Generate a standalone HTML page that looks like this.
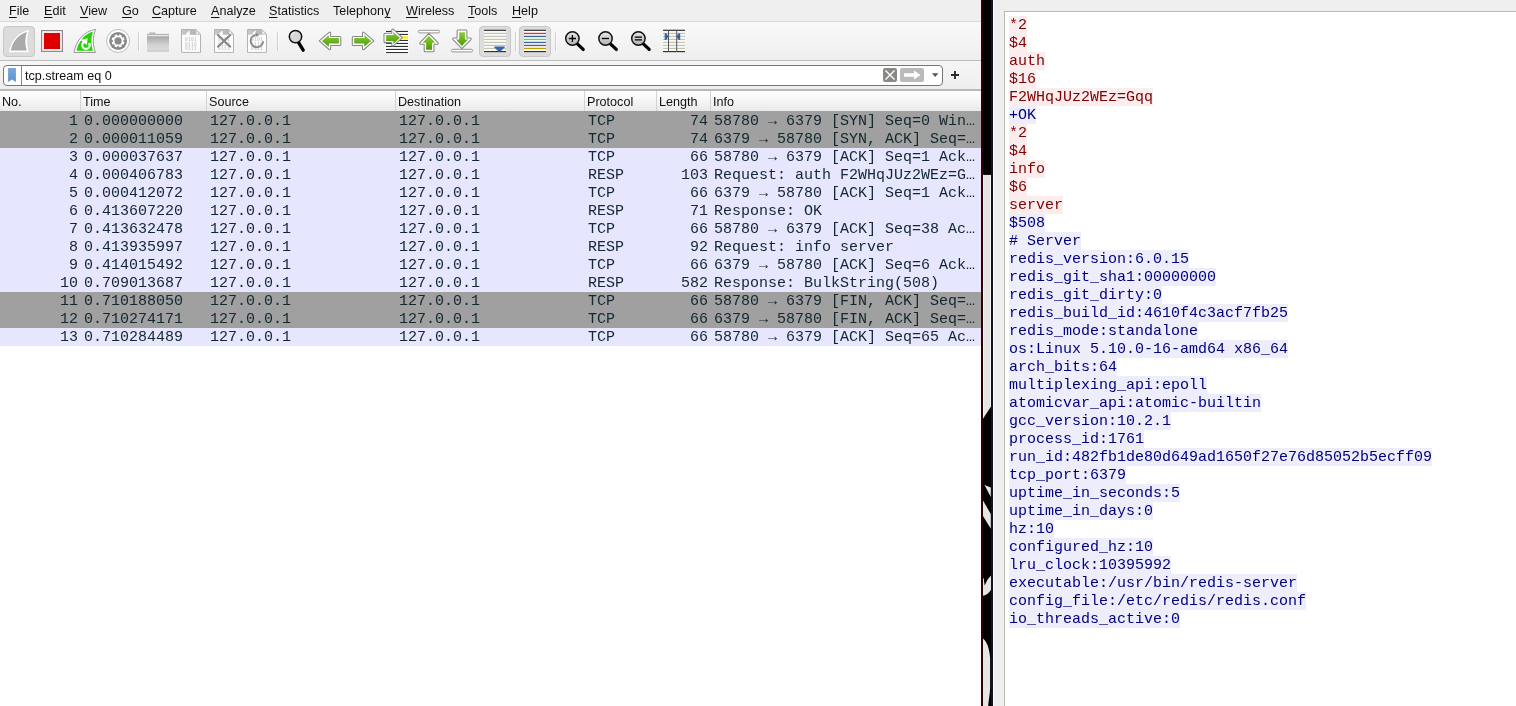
<!DOCTYPE html>
<html>
<head>
<meta charset="utf-8">
<title>Wireshark</title>
<style>
html,body{margin:0;padding:0;}
body{width:1516px;height:706px;overflow:hidden;background:#efefef;position:relative;font-family:"Liberation Sans",sans-serif;color:#1a1a1a;}
#app{position:absolute;left:0;top:0;width:1516px;height:706px;will-change:transform;}
#left{position:absolute;left:0;top:0;width:981px;height:706px;background:#fff;overflow:hidden;}
#menubar{position:absolute;left:0;top:0;width:981px;height:21px;background:#efefef;border-bottom:1px solid #dadada;}
#menubar span{position:absolute;top:4px;font-size:12.6px;line-height:15px;white-space:nowrap;color:#111;}
#menubar u{text-decoration:underline;text-underline-offset:2px;text-decoration-thickness:1px;}
#toolbar{position:absolute;left:0;top:22px;width:981px;height:38px;background:linear-gradient(#f9f9f9,#eeeeee);border-bottom:1px solid #bdbdbd;}
#toolbar svg{position:absolute;left:0;top:0;}
#filterbar{position:absolute;left:0;top:61px;width:981px;height:28px;background:linear-gradient(#f6f6f6,#eeeeee);}
#filter{position:absolute;left:3px;top:4px;width:938px;height:19px;border:1px solid #767676;border-radius:4px;background:#fff;}
#filter .bm{position:absolute;left:0;top:0;width:17px;height:19px;border-right:1px solid #8a8a8a;}
#filter .txt{position:absolute;left:21px;top:3px;font-size:12.6px;line-height:15px;color:#111;white-space:nowrap;}
#hdr{position:absolute;left:0;top:89px;width:981px;height:22px;background:linear-gradient(#ffffff 0%,#fafafa 30%,#e9e9e9 100%);border-top:2px solid #b9b9b9;box-sizing:border-box;}
#hdr span{position:absolute;top:4px;font-size:12.6px;line-height:15px;color:#111;white-space:nowrap;}
#hdr i{position:absolute;top:0;width:1px;height:20px;background:#d3d3d3;}
#plist{position:absolute;left:0;top:112px;width:981px;font-family:"Liberation Mono",monospace;font-size:15px;line-height:18px;color:#12272e;}
.r{position:relative;height:18px;width:981px;background:#e7e6ff;white-space:pre;}
.r.g{background:#a0a0a0;}
.r span{position:absolute;top:0;height:18px;line-height:20px;overflow:hidden;}
#strip{position:absolute;left:0;top:111px;width:981px;height:1px;background:#a0a0a0;}
.c0{left:0;width:78px;text-align:right;}
.c1{left:84px;}
.c2{left:210px;}
.c3{left:399px;}
.c4{left:588px;}
.c5{left:656px;width:52px;text-align:right;}
.c6{left:714px;width:264px;}
#bar{position:absolute;left:981px;top:0;width:13px;height:706px;}
#right{position:absolute;left:1004px;top:11px;width:520px;height:700px;background:#fff;border:1px solid #b9b9b9;}
#stream{position:absolute;left:4px;top:4px;font-family:"Liberation Mono",monospace;font-size:15px;line-height:18px;}
#stream span{white-space:pre;vertical-align:top;}
#stream div{height:18px;}
.c span{color:#7f0000;background:#fbeded;display:inline-block;height:18px;line-height:20px;}
.s span{color:#00007f;background:#ededfb;display:inline-block;height:18px;line-height:20px;}
</style>
</head>
<body>
<div id="app">
<div id="left">
<div id="menubar">
<span style="left:9px"><u>F</u>ile</span>
<span style="left:44px"><u>E</u>dit</span>
<span style="left:80px"><u>V</u>iew</span>
<span style="left:122px"><u>G</u>o</span>
<span style="left:152px"><u>C</u>apture</span>
<span style="left:211px"><u>A</u>nalyze</span>
<span style="left:269px"><u>S</u>tatistics</span>
<span style="left:333px">Telephon<u>y</u></span>
<span style="left:406px"><u>W</u>ireless</span>
<span style="left:468px"><u>T</u>ools</span>
<span style="left:512px"><u>H</u>elp</span>
</div>
<div id="toolbar">
<svg width="981" height="38" viewBox="0 22 981 38">
<defs>
<linearGradient id="gg" x1="0" y1="0" x2="0" y2="1"><stop offset="0" stop-color="#8ccf3a"/><stop offset="1" stop-color="#4a9a06"/></linearGradient>
<linearGradient id="fg" x1="0" y1="0" x2="0" y2="1"><stop offset="0" stop-color="#9c9c9c"/><stop offset="0.65" stop-color="#d4d4d4"/><stop offset="1" stop-color="#dadada"/></linearGradient>
<linearGradient id="lg" x1="0" y1="0" x2="0" y2="1"><stop offset="0" stop-color="#e8e8e8"/><stop offset="1" stop-color="#b2b2b2"/></linearGradient>
<linearGradient id="tb" x1="0" y1="0" x2="1" y2="0"><stop offset="0" stop-color="#c9c9c9"/><stop offset="1" stop-color="#b2b2b2"/></linearGradient>
<g id="doc">
<path d="M0.5 0.5 H14.8 L19.5 5.2 V23.4 H0.5 Z" fill="#fdfdfd" stroke="#b2b2b2" stroke-width="1"/>
<path d="M1 1 H14.6 L15 5.8 H1 Z" fill="url(#tb)"/>
<path d="M4.6 5.8 C5.6 3.6 7 2.2 9 1.7 C8.5 3.2 8.6 4.6 9.2 5.8 Z" fill="#fdfdfd"/>
<path d="M14.8 0.8 V5.2 H19.2 Z" fill="#f4f4f4" stroke="#b2b2b2" stroke-width="0.8" stroke-linejoin="round"/>
<g font-family="Liberation Mono, monospace" font-size="4.6" font-weight="bold" letter-spacing="0.25" fill="#cbcbcb"><text x="4" y="12">0101</text><text x="4" y="16.5">0110</text><text x="4" y="21">0111</text></g>
</g>
<g id="mag">
<line x1="5.2" y1="5.6" x2="10.8" y2="10.9" stroke="#000" stroke-width="3.3" stroke-linecap="round"/>
<circle cx="0" cy="0" r="6.7" fill="url(#lg)" stroke="#111" stroke-width="1.5"/>
</g>
<g id="lines">
<rect x="0" y="0" width="22" height="22.6" fill="#f8f8f5"/>
<g fill="#bdbdb0"><rect y="3.2" width="22" height="1"/><rect y="6.2" width="22" height="1"/><rect y="9.2" width="22" height="1"/><rect y="12.2" width="22" height="1"/><rect y="15.2" width="22" height="1"/><rect y="18.2" width="22" height="1"/></g>
<g fill="#2e3436"><rect y="0" width="22" height="1.2"/><rect y="21.3" width="22" height="1.2"/></g>
</g>
</defs>
<!-- pressed start button -->
<rect x="3.5" y="26.5" width="31" height="30" rx="3.5" fill="#dcdcdc" stroke="#c8c8c8"/>
<path d="M8.4 52.7 C10 41 18 31.5 29.9 29.3 C26.8 37.5 27 45.5 29.6 52.7 Z" fill="#ffffff" stroke="#cfcfcf" stroke-width="0.6" stroke-linejoin="round"/>
<path d="M10.8 50.5 C12.3 42 18.3 34.3 26.8 31.9 C24.7 38.5 24.9 44.8 26.8 50.5 Z" fill="#aaaaaa"/>
<!-- stop -->
<rect x="41.6" y="30.6" width="20.8" height="20.8" fill="#ffffff" stroke="#8a8a8a" stroke-width="1.2"/>
<rect x="43.9" y="32.9" width="16.2" height="16.2" fill="#dc0000"/>
<!-- restart -->
<path d="M74.1 52.5 C75.7 41 83.7 31.5 95.6 29.3 C92.5 37.5 92.7 45.5 95.5 52.5 Z" fill="#ffffff" stroke="#9a9a9a" stroke-width="1" stroke-linejoin="round"/>
<path d="M76.6 50.7 C78.1 42.3 84.1 34.5 92.9 31.6 C90.7 38.5 90.9 44.8 92.9 50.7 Z" fill="#22d400"/>
<circle cx="86" cy="45.2" r="3.7" fill="none" stroke="#ffffff" stroke-width="2.2"/>
<path d="M86.3 38.6 L90.6 38.6 L90.6 42.8 L87.4 43.4 Z" fill="#22d400"/>
<path d="M80.4 40.1 L87.6 38.2 L86.9 44.9 Z" fill="#ffffff"/>
<!-- options gear -->
<circle cx="118.1" cy="40.9" r="11.5" fill="#ffffff" stroke="#b4b4b4" stroke-width="0.9"/>
<circle cx="118.1" cy="40.9" r="9" fill="#8a8a8a"/>
<g transform="translate(118.1 40.9) rotate(22.5)" fill="#ffffff">
<circle r="5.2"/>
<g id="teeth"><rect x="-1.4" y="-6.5" width="2.8" height="13" rx="0.5"/><rect x="-6.5" y="-1.4" width="13" height="2.8" rx="0.5"/></g>
<use href="#teeth" transform="rotate(45)"/>
</g>
<circle cx="118.1" cy="40.9" r="3.6" fill="#8a8a8a"/>
<!-- separators -->
<g fill="#d0d0d0"><rect x="138" y="32" width="1" height="19"/><rect x="277" y="32" width="1" height="19"/><rect x="515" y="32" width="1" height="19"/><rect x="555" y="32" width="1" height="19"/></g>
<g fill="#fbfbfb"><rect x="139" y="32" width="1" height="19"/><rect x="278" y="32" width="1" height="19"/><rect x="516" y="32" width="1" height="19"/><rect x="556" y="32" width="1" height="19"/></g>
<!-- folder -->
<path d="M148.6 34.2 L149.5 32.3 H155 L155.9 34.2 Z" fill="#c2c2c2"/>
<rect x="147" y="33.9" width="22" height="17.7" rx="0.8" fill="url(#fg)"/>
<rect x="147" y="33.9" width="22" height="1.3" fill="#b0b0b0"/>
<rect x="147.3" y="35.2" width="21.4" height="1" fill="#fafafa"/>
<rect x="147" y="50.6" width="22" height="1" fill="#c6c6c6"/>
<!-- docs -->
<use href="#doc" x="181" y="29"/>
<use href="#doc" x="214" y="29"/>
<use href="#doc" x="247" y="29"/>
<path d="M217.4 34.6 L230.8 47.3 M230.8 34.6 L217.4 47.3" stroke="#858585" stroke-width="2" fill="none"/>
<path d="M255.6 34.9 A6.2 6.2 0 1 0 263.1 41.3" fill="none" stroke="#8a8a8a" stroke-width="2"/>
<path d="M255.4 32.6 L259.4 34.9 L255.8 37 Z" fill="#8a8a8a"/>
<!-- find -->
<line x1="298.6" y1="42.6" x2="303.2" y2="50.2" stroke="#000" stroke-width="3.3" stroke-linecap="round"/>
<circle cx="295.5" cy="36.6" r="6.2" fill="#d6d6d6" stroke="#111" stroke-width="1.5"/>
<path d="M291.2 35.8 A4.5 4.5 0 0 1 294.6 32.3" fill="none" stroke="#ffffff" stroke-width="1"/>
<!-- back / forward -->
<path d="M319.2 40.9 L329.2 32.3 Q330.6 31.8 330.6 33.2 V36.4 H339.8 Q340.8 36.4 340.8 37.4 V44.5 Q340.8 45.5 339.8 45.5 H330.6 V48.7 Q330.6 50.1 329.2 49.5 Z" fill="#ffffff" stroke="#868686" stroke-width="1.05" stroke-linejoin="round"/>
<path d="M321.9 40.9 L328.9 34.9 V38.1 H338.9 V43.6 H328.9 V46.8 Z" fill="url(#gg)"/>
<path d="M373.9 40.9 L363.9 32.3 Q362.5 31.8 362.5 33.2 V36.4 H353.3 Q352.3 36.4 352.3 37.4 V44.5 Q352.3 45.5 353.3 45.5 H362.5 V48.7 Q362.5 50.1 363.9 49.5 Z" fill="#ffffff" stroke="#868686" stroke-width="1.05" stroke-linejoin="round"/>
<path d="M371.2 40.9 L364.3 34.9 V38.1 H354.2 V43.6 H364.3 V46.8 Z" fill="url(#gg)"/>
<!-- goto -->
<rect x="385.5" y="30.4" width="23" height="23.4" fill="#ffffff"/>
<g fill="#2e3436"><rect x="386" y="30.9" width="22" height="1.1"/><rect x="386" y="33.9" width="22" height="1.1"/><rect x="386" y="39.9" width="22" height="1.1"/><rect x="386" y="42.9" width="22" height="1.1"/><rect x="386" y="45.9" width="22" height="1.1"/><rect x="386" y="48.9" width="22" height="1.1"/><rect x="386" y="52" width="22" height="1.1"/></g>
<rect x="401" y="36" width="7" height="3" fill="#fce94f"/>
<path d="M402.3 37.7 L393.4 29.3 Q391.8 28.6 391.8 30.2 V33.2 H385 Q384 33.2 384 34.2 V41.6 Q384 42.6 385 42.6 H391.8 V45 Q391.8 46.6 393.4 45.8 Z" fill="#ffffff" stroke="#868686" stroke-width="1.05" stroke-linejoin="round"/>
<path d="M400 37.7 L393.3 32 V35.1 H386.2 V40.9 H393.3 V43.8 Z" fill="url(#gg)"/>
<!-- first -->
<rect x="418.4" y="30.3" width="21.2" height="2.6" rx="1.3" fill="#ffffff" stroke="#8a8a82" stroke-width="0.9"/>
<path d="M428.9 33.4 L438 42.6 Q438.6 44.3 437 44.3 H434 V50.7 Q434 51.7 433 51.7 H425.2 Q424.2 51.7 424.2 50.7 V44.3 H421 Q419.4 44.3 420 42.6 Z" fill="#ffffff" stroke="#868686" stroke-width="1.05" stroke-linejoin="round"/>
<path d="M428.9 35.8 L435.2 42.8 H432.1 V49.8 H426.1 V42.8 H422.7 Z" fill="url(#gg)"/>
<!-- last -->
<rect x="451.4" y="49.3" width="21.2" height="2.6" rx="1.3" fill="#ffffff" stroke="#8a8a82" stroke-width="0.9"/>
<path d="M461.9 48.7 L471 39.6 Q471.6 37.9 470 37.9 H466.9 V31 Q466.9 30 465.9 30 H458.1 Q457.1 30 457.1 31 V37.9 H454 Q452.4 37.9 453 39.6 Z" fill="#ffffff" stroke="#868686" stroke-width="1.05" stroke-linejoin="round"/>
<path d="M461.9 46 L468.1 39.4 H464.9 V32.2 H459.2 V39.4 H456 Z" fill="url(#gg)"/>
<!-- autoscroll pressed -->
<rect x="479.5" y="26.5" width="31" height="30" rx="3.5" fill="#dcdcdc" stroke="#c8c8c8"/>
<use href="#lines" x="484" y="29.7"/>
<path d="M494.6 46.4 H504.4 Q505.4 46.6 504.6 47.4 L500.6 51.3 Q499.5 52 498.4 51.3 L494.4 47.4 Q493.6 46.6 494.6 46.4 Z" fill="#3465a4"/>
<!-- colorize pressed -->
<rect x="519.5" y="26.5" width="31" height="30" rx="3.5" fill="#dcdcdc" stroke="#c8c8c8"/>
<rect x="524" y="29.7" width="22" height="22.6" fill="#fcfcfc"/>
<rect x="524" y="29.7" width="22" height="1.2" fill="#2e3436"/>
<rect x="524" y="32.8" width="22" height="1.3" fill="#ef2929"/>
<rect x="524" y="35.8" width="22" height="1.3" fill="#3465a4"/>
<rect x="524" y="38.8" width="22" height="1.3" fill="#73d216"/>
<rect x="524" y="41.8" width="22" height="1.3" fill="#3465a4"/>
<rect x="524" y="44.8" width="22" height="1.3" fill="#75507b"/>
<rect x="524" y="47.8" width="22" height="1.3" fill="#c4a000"/>
<rect x="524" y="51" width="22" height="1.2" fill="#2e3436"/>
<!-- zoom in/out/normal -->
<use href="#mag" x="572.4" y="38.5"/>
<use href="#mag" x="605.5" y="38.5"/>
<use href="#mag" x="638.4" y="38.5"/>
<g stroke="#000" stroke-width="1.3" fill="none"><path d="M568.8 38.5 H576 M572.4 34.9 V42.1"/><path d="M601.9 38.5 H609.1"/><path d="M634.8 37.2 H642 M634.8 39.8 H642"/></g>
<!-- resize columns -->
<use href="#lines" x="663" y="29.7"/>
<g fill="#555753"><rect x="668" y="30" width="1" height="22"/><rect x="676.2" y="30" width="1" height="22"/></g>
<path d="M664.7 33.3 H666.2 L668.6 36.6 L666.2 39.9 H664.7 Z" fill="#3465a4"/>
<path d="M680.2 33.3 H678.7 L676.3 36.6 L678.7 39.9 H680.2 Z" fill="#3465a4"/>
</svg>
</div>
<div id="filterbar">
<div id="filter"><div class="bm"></div><div class="txt">tcp.stream eq 0</div></div>
<svg width="981" height="29" viewBox="0 61 981 29" style="position:absolute;left:0;top:0">

<defs><linearGradient id="bmg" x1="0" y1="0" x2="0" y2="1"><stop offset="0" stop-color="#7ba7da"/><stop offset="1" stop-color="#5f93cf"/></linearGradient></defs><path d="M8.1 68 H15.9 V81.9 L12 79.6 L8.1 81.9 Z" fill="url(#bmg)"/>
<rect x="883" y="68" width="14" height="14" rx="2" fill="#888a85"/>
<path d="M885.5 70.5 L894.5 79.5 M894.5 70.5 L885.5 79.5" stroke="#fff" stroke-width="1.4" fill="none"/>
<rect x="900" y="68" width="24" height="14" rx="2" fill="#bababa"/>
<path d="M904 73.2 H914 V70.6 L920.5 75 L914 79.4 V76.8 H904 Z" fill="#fff"/>
<path d="M932 73.3 H938.4 L935.2 77 Z" fill="#555"/>
<path d="M951 75 H959 M955 71 V79" stroke="#2a2a2a" stroke-width="1.9" fill="none"/>

</svg>
</div>
<div id="hdr">
<span style="left:2px">No.</span><i style="left:80px"></i>
<span style="left:83px">Time</span><i style="left:206px"></i>
<span style="left:209px">Source</span><i style="left:395px"></i>
<span style="left:398px">Destination</span><i style="left:584px"></i>
<span style="left:587px">Protocol</span><i style="left:656px"></i>
<span style="left:659px">Length</span><i style="left:710px"></i>
<span style="left:713px">Info</span>
</div>
<div id="strip"></div>
<div id="plist">
<div class="r g"><span class="c0">1</span><span class="c1">0.000000000</span><span class="c2">127.0.0.1</span><span class="c3">127.0.0.1</span><span class="c4">TCP</span><span class="c5">74</span><span class="c6">58780 → 6379 [SYN] Seq=0 Win…</span></div>
<div class="r g"><span class="c0">2</span><span class="c1">0.000011059</span><span class="c2">127.0.0.1</span><span class="c3">127.0.0.1</span><span class="c4">TCP</span><span class="c5">74</span><span class="c6">6379 → 58780 [SYN, ACK] Seq=…</span></div>
<div class="r"><span class="c0">3</span><span class="c1">0.000037637</span><span class="c2">127.0.0.1</span><span class="c3">127.0.0.1</span><span class="c4">TCP</span><span class="c5">66</span><span class="c6">58780 → 6379 [ACK] Seq=1 Ack…</span></div>
<div class="r"><span class="c0">4</span><span class="c1">0.000406783</span><span class="c2">127.0.0.1</span><span class="c3">127.0.0.1</span><span class="c4">RESP</span><span class="c5">103</span><span class="c6">Request: auth F2WHqJUz2WEz=G…</span></div>
<div class="r"><span class="c0">5</span><span class="c1">0.000412072</span><span class="c2">127.0.0.1</span><span class="c3">127.0.0.1</span><span class="c4">TCP</span><span class="c5">66</span><span class="c6">6379 → 58780 [ACK] Seq=1 Ack…</span></div>
<div class="r"><span class="c0">6</span><span class="c1">0.413607220</span><span class="c2">127.0.0.1</span><span class="c3">127.0.0.1</span><span class="c4">RESP</span><span class="c5">71</span><span class="c6">Response: OK</span></div>
<div class="r"><span class="c0">7</span><span class="c1">0.413632478</span><span class="c2">127.0.0.1</span><span class="c3">127.0.0.1</span><span class="c4">TCP</span><span class="c5">66</span><span class="c6">58780 → 6379 [ACK] Seq=38 Ac…</span></div>
<div class="r"><span class="c0">8</span><span class="c1">0.413935997</span><span class="c2">127.0.0.1</span><span class="c3">127.0.0.1</span><span class="c4">RESP</span><span class="c5">92</span><span class="c6">Request: info server</span></div>
<div class="r"><span class="c0">9</span><span class="c1">0.414015492</span><span class="c2">127.0.0.1</span><span class="c3">127.0.0.1</span><span class="c4">TCP</span><span class="c5">66</span><span class="c6">6379 → 58780 [ACK] Seq=6 Ack…</span></div>
<div class="r"><span class="c0">10</span><span class="c1">0.709013687</span><span class="c2">127.0.0.1</span><span class="c3">127.0.0.1</span><span class="c4">RESP</span><span class="c5">582</span><span class="c6">Response: BulkString(508)</span></div>
<div class="r g"><span class="c0">11</span><span class="c1">0.710188050</span><span class="c2">127.0.0.1</span><span class="c3">127.0.0.1</span><span class="c4">TCP</span><span class="c5">66</span><span class="c6">58780 → 6379 [FIN, ACK] Seq=…</span></div>
<div class="r g"><span class="c0">12</span><span class="c1">0.710274171</span><span class="c2">127.0.0.1</span><span class="c3">127.0.0.1</span><span class="c4">TCP</span><span class="c5">66</span><span class="c6">6379 → 58780 [FIN, ACK] Seq=…</span></div>
<div class="r"><span class="c0">13</span><span class="c1">0.710284489</span><span class="c2">127.0.0.1</span><span class="c3">127.0.0.1</span><span class="c4">TCP</span><span class="c5">66</span><span class="c6">58780 → 6379 [ACK] Seq=65 Ac…</span></div>
</div>
</div>
<svg id="bar" width="13" height="706" viewBox="981 0 13 706">
<rect x="981" y="0" width="13" height="706" fill="#f4f4f4"/>
<rect x="984" y="0" width="6" height="706" fill="#e5e5e5"/>
<rect x="983" y="0" width="8" height="174.9" fill="#000"/>
<path d="M991 406.4 L983 418.8 V706 H991 Z" fill="#000"/>
<path d="M984.5 485 L990.8 487.5 V497 Z" fill="#e6e6e6"/>
<path d="M983 500.4 L990.8 514.1 V528.8 L983 516.1 Z" fill="#e6e6e6"/>
<path d="M991 575.6 L987.6 579.5 L984.6 585.6 L983.7 578.2 L983 578.2 V595.7 C986 595.5 989.5 592.5 991 589.8 Z" fill="#e6e6e6"/>
<path d="M983 638.4 C986.5 641 989.6 648 990.1 658 V688 C989.9 695 988.5 700 988.2 706 H983 Z" fill="#e6e6e6"/>
<rect x="981" y="0" width="2" height="706" fill="#300101"/>
<rect x="991" y="0" width="2" height="706" fill="#12161c"/>
<rect x="993" y="0" width="1" height="706" fill="#ffffff"/>
</svg>
<div id="right">
<div id="stream">
<div class="c"><span>*2</span></div>
<div class="c"><span>$4</span></div>
<div class="c"><span>auth</span></div>
<div class="c"><span>$16</span></div>
<div class="c"><span>F2WHqJUz2WEz=Gqq</span></div>
<div class="s"><span>+OK</span></div>
<div class="c"><span>*2</span></div>
<div class="c"><span>$4</span></div>
<div class="c"><span>info</span></div>
<div class="c"><span>$6</span></div>
<div class="c"><span>server</span></div>
<div class="s"><span>$508</span></div>
<div class="s"><span># Server</span></div>
<div class="s"><span>redis_version:6.0.15</span></div>
<div class="s"><span>redis_git_sha1:00000000</span></div>
<div class="s"><span>redis_git_dirty:0</span></div>
<div class="s"><span>redis_build_id:4610f4c3acf7fb25</span></div>
<div class="s"><span>redis_mode:standalone</span></div>
<div class="s"><span>os:Linux 5.10.0-16-amd64 x86_64</span></div>
<div class="s"><span>arch_bits:64</span></div>
<div class="s"><span>multiplexing_api:epoll</span></div>
<div class="s"><span>atomicvar_api:atomic-builtin</span></div>
<div class="s"><span>gcc_version:10.2.1</span></div>
<div class="s"><span>process_id:1761</span></div>
<div class="s"><span>run_id:482fb1de80d649ad1650f27e76d85052b5ecff09</span></div>
<div class="s"><span>tcp_port:6379</span></div>
<div class="s"><span>uptime_in_seconds:5</span></div>
<div class="s"><span>uptime_in_days:0</span></div>
<div class="s"><span>hz:10</span></div>
<div class="s"><span>configured_hz:10</span></div>
<div class="s"><span>lru_clock:10395992</span></div>
<div class="s"><span>executable:/usr/bin/redis-server</span></div>
<div class="s"><span>config_file:/etc/redis/redis.conf</span></div>
<div class="s"><span>io_threads_active:0</span></div>
</div>
</div>
</div>
</body>
</html>
